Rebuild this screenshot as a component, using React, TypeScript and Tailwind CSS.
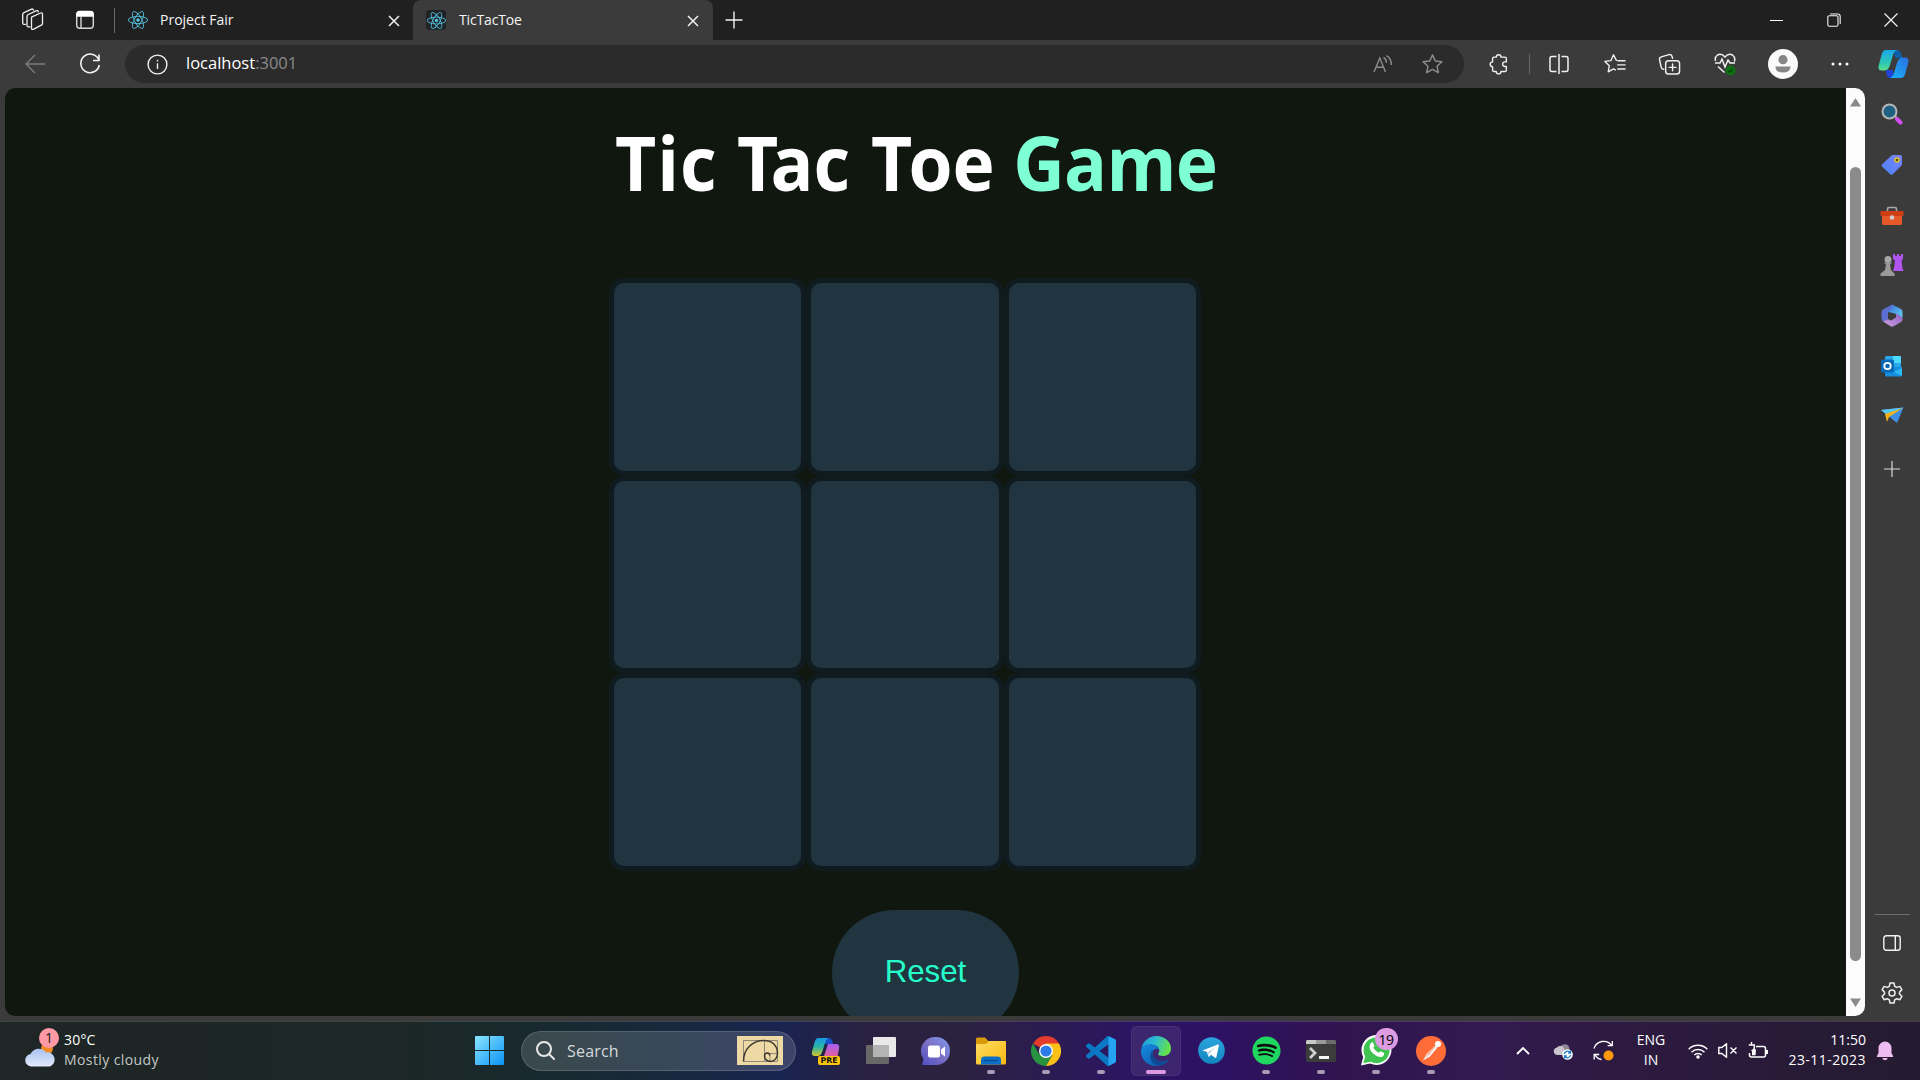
import React from "react";
import { FaReact, FaSpotify } from "react-icons/fa";

type Kids = { children?: React.ReactNode };

/* Stroked icon on a 24px canvas */
function Line({ children, s = 24, c = "#f0f0f0", w = 1.5 }: Kids & { s?: number; c?: string; w?: number }) {
  return (
    <svg width={s} height={s} viewBox="0 0 24 24" fill="none" stroke={c} strokeWidth={w} strokeLinecap="round" strokeLinejoin="round" className="shrink-0">
      {children}
    </svg>
  );
}

/* Filled icon on a 30px canvas */
function Art({ children, s = 30 }: Kids & { s?: number }) {
  return (
    <svg width={s} height={s} viewBox="0 0 30 30" className="shrink-0">
      {children}
    </svg>
  );
}

function TabClose() {
  return (
    <svg width="12" height="12" viewBox="0 0 12 12" stroke="#f2f2f2" strokeWidth="1.5" className="mt-px shrink-0">
      <path d="M1 1l10 10M11 1L1 11" />
    </svg>
  );
}

function TabBar() {
  return (
    <div className="flex h-10 shrink-0 bg-[#202020]">
      <div className="flex h-10 w-[114px] items-center">
        <div className="ml-[20px] flex w-[25px] justify-center">
          <Line w={1.3}>
            <path d="M10.5 9.2l9-4.2q2-.7 2 1.2v9.3q0 1.2-1.2 1.7l-7.6 4q-2.2.9-2.2-1.2z" />
            <path d="M9 18.8q-3 .6-3-1.5V8.5q0-1.4 1.3-2L15 2.8q2-.7 2.3 1" />
            <path d="M4.5 16.3q-2.8.6-2.8-1.5V6.500q0-1.200 1.300-1.800L10 1.300q2-.8 2.500.7" />
          </Line>
        </div>
        <div className="ml-[30px]">
          <svg width="20" height="20" viewBox="0 0 20 20" fill="none" stroke="#d8d8d8" strokeWidth="1.4">
            <rect x="1.700" y="1.700" width="16.600" height="16.600" rx="3" />
            <path d="M2 4q0-2.500 2.500-2.500h11Q18 1.500 18 4v2H2z" fill="#ffffff" stroke="#ffffff" />
            <path d="M6 6v12" />
          </svg>
        </div>
      </div>
      <div className="mt-2 h-[25px] w-px bg-[#6a6a6a]" />
      <div className="flex h-10 w-[298px] items-center pr-[13px] pl-[13px]">
        <FaReact size={20} color="#54c0de" />
        <span className="-mt-0.5 ml-[12px] text-[14px] text-[#f4f4f4]">Project Fair</span>
        <span className="ml-auto"><TabClose /></span>
      </div>
      <div className="flex h-10 w-[300px] items-center rounded-t-[8px] bg-[#3b3b3b] pr-[14px] pl-[13px]">
        <span className="flex size-5 items-center justify-center rounded-[3px] bg-[#202326]"><FaReact size={19} color="#54c0de" /></span>
        <span className="-mt-0.5 ml-[13px] text-[14px] tracking-[-0.15px] text-[#f4f4f4]">TicTacToe</span>
        <span className="ml-auto"><TabClose /></span>
      </div>
      <div className="flex h-10 w-[42px] items-center justify-center">
        <svg width="18" height="18" viewBox="0 0 18 18" stroke="#f2f2f2" strokeWidth="1.4"><path d="M9 .5v17M.5 9h17" /></svg>
      </div>
      <div className="ml-auto flex h-10">
        <div className="flex w-[57px] items-center justify-center"><div className="h-px w-[13px] bg-white" /></div>
        <div className="flex w-[57px] items-center justify-center">
          <svg width="14" height="14" viewBox="0 0 14 14" fill="none" stroke="#f4f4f4" strokeWidth="1.1">
            <rect x=".8" y="2.8" width="10.2" height="10.4" rx="1.5" />
            <path d="M3.200 1h7.600q2.400 0 2.400 2.400V11" />
          </svg>
        </div>
        <div className="flex w-[58px] items-center justify-center">
          <svg width="14" height="14" viewBox="0 0 14 14" stroke="#f2f2f2" strokeWidth="1.2"><path d="M.5.5l13 13M13.5.5l-13 13" /></svg>
        </div>
      </div>
    </div>
  );
}

function Slot({ children, w = "w-[55px]" }: Kids & { w?: string }) {
  return <div className={`flex h-full shrink-0 items-center justify-center ${w}`}>{children}</div>;
}

const starPath = "M12 2l2.900 6.300 6.900.8-5.100 4.700 1.400 6.800L12 17.200l-6.100 3.400 1.400-6.800L2.200 9.100l6.900-.8z";

function CopilotArt() {
  return (
    <svg width="31" height="28" viewBox="0 0 31 28" className="shrink-0">
      <defs>
        <linearGradient id="cpA" x1="0" y1="0" x2="0" y2="1"><stop offset="0" stopColor="#1aa9ea" /><stop offset=".6" stopColor="#2cc3b8" /><stop offset="1" stopColor="#5be08c" /></linearGradient>
        <linearGradient id="cpB" x1="1" y1="0" x2="0" y2="1"><stop offset="0" stopColor="#2a6ee0" /><stop offset="1" stopColor="#19b5f5" /></linearGradient>
      </defs>
      <path d="M15 0h4q3 0 4 4l1.500 4h-7z" fill="#0d5fa8" />
      <path d="M16 28h-4q-3 0-3.500-4L8 20h7z" fill="#2145d8" />
      <path d="M8 0h11q-3 1-4 5l-3 10q-1.500 5.500-6 5.500H4Q-.5 20.500.8 15l3-11Q5 0 8 0z" fill="url(#cpA)" />
      <path d="M23 28H12q3-1 4-5l3-10q1.500-5.500 6-5.500h2Q31.500 7.500 30.200 13l-3 11q-1.200 4-4.200 4z" fill="url(#cpB)" />
    </svg>
  );
}

function Toolbar() {
  return (
    <div className="flex h-12 shrink-0 items-center">
      <div className="flex w-[125px] shrink-0 items-center pl-[24px]">
        <svg width="22" height="20" viewBox="0 0 22 20" fill="none" stroke="#7c7c7c" strokeWidth="1.4"><path d="M21 10H2M11 1l-9 9 9 9" /></svg>
        <svg width="22" height="22" viewBox="0 0 22 22" fill="none" stroke="#f4f4f4" strokeWidth="1.6" className="ml-[33px]">
          <path d="M20 7.500A9.300 9.300 0 1 0 20.300 12M20 1.500v6h-6" />
        </svg>
      </div>
      <div className="flex h-[38px] w-[1339px] shrink-0 items-center rounded-full bg-[#2b2b2b] pr-[20px] pl-[22px]">
        <svg width="21" height="21" viewBox="0 0 21 21" fill="none" stroke="#f0f0f0" strokeWidth="1.4">
          <circle cx="10.500" cy="10.500" r="9.400" /><path d="M10.500 9.300v5.700" /><path d="M10.500 5.800v1.700" />
        </svg>
        <span className="-mt-px ml-[18px] text-[16.5px] text-white">localhost<span className="text-[#8a8a8a]">:3001</span></span>
        <div className="ml-auto flex items-center">
          <svg width="20" height="18" viewBox="0 0 20 18" fill="none" stroke="#8d8d8d" strokeWidth="1.4">
            <path d="M1 17L6.800 3 12.500 17M3 12.300h7.600" />
            <path d="M10.500 2.300q3 2 3 5.500M13.500.7q5 3 4.800 9.300" />
          </svg>
          <span className="ml-[28px]"><Line c="#8d8d8d" s={23}><path d={starPath} /></Line></span>
        </div>
      </div>
      <div className="ml-auto flex h-full items-center">
        <Slot w="w-[61px]">
          <Line s={22}><path d="M9 4.500a2.600 2.600 0 0 1 5.200 0h4.300q1.500 0 1.500 1.500v3.700h-1.600a2.500 2.500 0 0 0 0 5H20v4q0 1.500-1.500 1.500h-4.300a2.600 2.600 0 0 1-5.200 0H6.500Q5 20.200 5 18.700v-3.800a2.600 2.600 0 0 1 0-5.200V6q0-1.500 1.500-1.500z" /></Line>
        </Slot>
        <div className="h-5 w-px bg-[#666]" />
        <Slot w="w-[57px]">
          <svg width="20" height="20" viewBox="0 0 20 20" fill="none" stroke="#f2f2f2" strokeWidth="1.5"><path d="M7.500 2.500H3q-2 0-2 2v11q0 2 2 2h4.500M12.500 2.500H17q2 0 2 2v11q0 2-2 2h-4.500M10 0v20" /></svg>
        </Slot>
        <Slot>
          <Line s={22}><path d="M13.500 8L10.400 2 7.500 8.300l-6.500.9 4.800 4.600-1.200 6.800 5.800-3.200 2 1M15 8.500h8M15 13h8M15 17.500h8" /></Line>
        </Slot>
        <Slot>
          <Line s={23}><path d="M6 17q-2.300-.2-2.700-2.300L1.600 7Q1.200 4.700 3.500 4l8-2.300q2.200-.5 3 1.500l.7 2.300" /><rect x="8" y="8" width="14.500" height="14" rx="3" /><path d="M15.200 11.500v7M11.700 15h7" /></Line>
        </Slot>
        <Slot>
          <svg width="22" height="24" viewBox="0 0 22 24" fill="none" stroke="#f2f2f2" strokeWidth="1.5">
            <path d="M1.500 9Q.5 5 3.500 3 7.500 1 11 5q3.500-4 7.500-2 3 2 2 6.500M1 11h5l2-4 3 8 3-7 2 3h5M4 14.500l6.500 6" />
            <circle cx="16.500" cy="18.500" r="5" fill="#0f7012" stroke="none" /><path d="M14.300 18.600l1.500 1.500 3-3" stroke="#073f08" strokeWidth="1.2" />
          </svg>
        </Slot>
        <Slot w="w-[61px]">
          <svg width="30" height="30" viewBox="0 0 30 30"><circle cx="15" cy="15" r="15" fill="#fafafa" /><circle cx="15" cy="10.700" r="4.600" fill="#868686" /><path d="M7.500 17.500h15q0 6-7.500 6t-7.500-6z" fill="#868686" /></svg>
        </Slot>
        <Slot w="w-[54px]">
          <svg width="18" height="4" viewBox="0 0 18 4" fill="#fff"><circle cx="2" cy="2" r="1.5" /><circle cx="9" cy="2" r="1.5" /><circle cx="16" cy="2" r="1.5" /></svg>
        </Slot>
        <Slot w="w-[53px]"><CopilotArt /></Slot>
      </div>
    </div>
  );
}

function Game() {
  return (
    <main className="flex-1 overflow-hidden rounded-l-[10px] bg-[#0f170f]">
      <h1 className="mt-[24px] ml-[610px] h-[101px] origin-left scale-x-95 text-[75px] leading-[101px] font-bold whitespace-nowrap text-white">
        <span className="tracking-[1px]">Tic </span>
        <span className="tracking-[-8.2px]">T</span>ac<span className="tracking-[2.5px]"> </span>
        <span className="tracking-[-4px]">T</span>oe{" "}
        <span className="tracking-[-0.7px] text-[#7fffd4]">Game</span>
      </h1>
      <div className="mt-[65px] ml-[603.75px] grid w-[592.5px] grid-cols-3">
        {Array.from({ length: 9 }, (_, i) => (
          <div key={i} className="h-[197.5px] rounded-[15px] border-[5px] border-[#101b20] bg-[#203540]" />
        ))}
      </div>
      <button className="mt-[39.5px] ml-[827px] block h-[125px] w-[187px] rounded-[62.5px] bg-[#203540] font-['Liberation_Sans',sans-serif] text-[31.25px] text-[#26ffcb]">
        Reset
      </button>
    </main>
  );
}

function Scrollbar() {
  return (
    <div className="flex w-[19px] flex-col items-center rounded-r-[10px] bg-[#fcfcfc]">
      <svg width="11" height="9" viewBox="0 0 11 9" className="mt-[10px]"><path d="M5.500 0L11 8.500H0z" fill="#8b8b8b" /></svg>
      <div className="mt-[60px] h-[794px] w-[11px] rounded-full bg-[#8b8b8b]" />
      <svg width="11" height="9" viewBox="0 0 11 9" className="mt-[37px]"><path d="M5.500 9L11 .5H0z" fill="#8b8b8b" /></svg>
    </div>
  );
}

function SideItem({ children, h = "h-[50px]" }: Kids & { h?: string }) {
  return <div className={`flex w-full shrink-0 items-center justify-center pr-px ${h}`}>{children}</div>;
}

function Sidebar() {
  return (
    <aside className="flex w-[55px] flex-col items-center pt-px">
      <SideItem>
        <svg width="22" height="22" viewBox="0 0 22 22"><path d="M13 12l3 3" stroke="#aaa" strokeWidth="2" /><circle cx="8.500" cy="8.500" r="7" fill="#1f6182" stroke="#b5b5b5" strokeWidth="2" /><path d="M16 16l3.500 3.500" stroke="#d34df0" strokeWidth="4" strokeLinecap="round" /></svg>
      </SideItem>
      <SideItem h="h-[52px]">
        <svg width="22" height="22" viewBox="0 0 22 22"><defs><linearGradient id="tag" x1="0" y1="1" x2="1" y2="0"><stop stopColor="#4a83fa" /><stop offset="1" stopColor="#7b83f6" /></linearGradient></defs><path d="M12 1h7q2 0 2 2v7q0 1-1 2l-8.300 8.300q-1.200 1.200-2.400 0L1.200 12.700q-1.200-1.200 0-2.400L10 2q1-1 2-1z" fill="url(#tag)" /><circle cx="16" cy="6" r="2" fill="#4a4a20" stroke="#e5c51b" strokeWidth="1.5" /></svg>
      </SideItem>
      <SideItem>
        <svg width="24" height="20" viewBox="0 0 24 20"><path d="M7.500 5V3q0-1.500 1.500-1.500h6q1.500 0 1.500 1.500v2" fill="none" stroke="#a8a8a8" strokeWidth="1.6" /><rect x="2" y="9" width="20" height="10" rx="1.5" fill="#e5592a" /><rect x=".5" y="5" width="23" height="5" rx="1" fill="#cf3f17" /><circle cx="12" cy="11.500" r="2.200" fill="#cfcfcf" /></svg>
      </SideItem>
      <SideItem h="h-[48px]">
        <svg width="24" height="24" viewBox="0 0 24 24"><path d="M13 1h2v1.700h2V1h2v1.700h2V1h2v5l-1.500 1.500L22.500 15l1 3H13l1-3 1-7.500L13 6z" fill="#b055ee" /><circle cx="8" cy="6.500" r="3.500" fill="#a6a6a6" /><path d="M4.500 9.500h7v1.300H10l1 6.200 3.500 3.500V23h-14v-2.500L5 17l1-6.200H4.500z" fill="#9a9a9a" /></svg>
      </SideItem>
      <SideItem h="h-[53px]">
        <svg width="22" height="23" viewBox="0 0 22 23"><defs><linearGradient id="mA" x1="0" y1="0" x2="1" y2="1"><stop stopColor="#3b6fd8" /><stop offset="1" stopColor="#62d0ef" /></linearGradient><linearGradient id="mB" x1="0" y1="1" x2="1" y2="0"><stop stopColor="#cfa0e0" /><stop offset="1" stopColor="#8e63c4" /></linearGradient></defs><path d="M11 .5l9 4.500q1.500 1 1.500 2.500v6L14 9.500 7 8z" fill="url(#mA)" /><path d="M11 .5L2 5.500Q.5 6.500.5 8v7q0 1.500 1.500 2.500l5-2.500V8.500q0-1 1-2l3-2z" fill="#5c6fd0" /><path d="M2 17.500l5-2.500 3 1.500 5-3V9.500l6.500 4v2q0 1.500-1.500 2.500l-7.500 4.200q-1.500.8-3 0z" fill="url(#mB)" /></svg>
      </SideItem>
      <SideItem h="h-[48px]">
        <svg width="22" height="21" viewBox="0 0 22 21"><rect x="4" y="0" width="16" height="12" rx="1.5" fill="#28a8ea" /><path d="M12 0h7q1 0 1 1v6h-8z" fill="#50d9ff" /><path d="M4 11h17v8q0 1.500-1.500 1.500H5.500Q4 20.500 4 19z" fill="#1490df" /><path d="M21 12l-8 4 8 4z" fill="#2db7f5" /><rect x="0" y="3.500" width="13" height="13" rx="1.5" fill="#0868b8" /><circle cx="6.500" cy="10" r="3.200" fill="none" stroke="#fff" strokeWidth="1.8" /></svg>
      </SideItem>
      <SideItem>
        <svg width="23" height="17" viewBox="0 0 23 17"><path d="M0 3L22.500.500 16 16l-5-4z" fill="#3e8fe8" /><path d="M0 3L22.500.500 5 7z" fill="#5ac8f5" /><path d="M4 7L22 1 8 10 6 15z" fill="#f2b519" /></svg>
      </SideItem>
      <SideItem h="h-[58px]">
        <svg width="16" height="16" viewBox="0 0 16 16" stroke="#d8d8d8" strokeWidth="1.2"><path d="M8 0v16M0 8h16" /></svg>
      </SideItem>
      <div className="mt-auto h-px w-[35px] bg-[#6e6e6e]" />
      <SideItem h="h-[55px]">
        <svg width="18" height="16" viewBox="0 0 18 16" fill="none" stroke="#f2f2f2" strokeWidth="1.4"><rect x=".8" y=".8" width="16.400" height="14.400" rx="2.500" /><path d="M12.300 1v14" /></svg>
      </SideItem>
      <SideItem h="h-[46px]">
        <Line s={24} w={1.5}><circle cx="12" cy="12" r="3" /><path d="M10 2h4l.7 3.300 2 1.100 3.200-1 2 3.400-2.400 2.300v1.900l2.400 2.300-2 3.400-3.200-1-2 1.100L14 22h-4l-.7-3.200-2-1.100-3.200 1-2-3.400L4.500 13v-1.900L2.100 8.800l2-3.400 3.200 1 2-1.100z" /></Line>
      </SideItem>
      <div className="h-[5px]" />
    </aside>
  );
}

function TaskItem({ children, dot = false }: Kids & { dot?: boolean }) {
  return (
    <div className="relative flex h-[59px] w-[55px] shrink-0 items-center justify-center">
      {children}
      {dot && <div className="absolute bottom-[6px] left-[23.5px] h-1 w-2 rounded-full bg-[#a79bb5]" />}
    </div>
  );
}

function Taskbar() {
  return (
    <footer className="flex h-[59px] shrink-0 items-center bg-[linear-gradient(90deg,#1f2625_0px,#1c2726_400px,#172a30_560px,#172840_690px,#192450_780px,#2a2140_870px,#2b2240_960px,#2c1562_1130px,#2d1163_1220px,#30144f_1340px,#321a50_1480px,#2d1a40_1620px,#241b30_1920px)] text-white shadow-[inset_0_1px_0_rgba(255,255,255,0.14)]">
      <div className="flex w-[462px] items-center pl-[24px]">
        <div className="relative h-[40px] w-[32px]">
          <svg width="32" height="40" viewBox="0 0 32 40">
            <defs><linearGradient id="cl" x1="0" y1="0" x2="0" y2="1"><stop stopColor="#a9c2f2" /><stop offset="1" stopColor="#e3eafb" /></linearGradient></defs>
            <circle cx="23" cy="17.500" r="6" fill="#f08a24" />
            <path d="M7 35.500a6.300 6.300 0 0 1-.5-12.500A9 9 0 0 1 22 21.500a7 7 0 0 1 3 14z" fill="url(#cl)" />
          </svg>
          <div className="absolute top-[-3px] left-[15px] flex size-5 items-center justify-center rounded-full bg-[#ff99a4] text-[14px] text-[#202020]">1</div>
        </div>
        <div className="-mt-0.5 ml-2 text-[14px] leading-5">
          <div className="tracking-[0.2px]">30°C</div>
          <div className="tracking-[0.4px] text-[#c3c6c6]">Mostly cloudy</div>
        </div>
      </div>
      <TaskItem>
        <Art s={29}><defs><linearGradient id="win" x1="0" y1="0" x2="1" y2="1"><stop stopColor="#8be6ff" /><stop offset="1" stopColor="#0a93f5" /></linearGradient></defs><path d="M0 1q0-1 1-1h13.500v14.500H0zM15.500 0H29q1 0 1 1v13.500H15.500zM0 15.500h14.500V30H1q-1 0-1-1zM15.500 15.500H30V29q0 1-1 1H15.500z" fill="url(#win)" /></Art>
      </TaskItem>
      <div className="mr-[2.5px] ml-1 flex h-10 w-[275px] shrink-0 items-center rounded-full border border-white/15 bg-white/15 pr-[12px] pl-[14px]">
        <svg width="19" height="19" viewBox="0 0 19 19" fill="none" stroke="#e8e8e8" strokeWidth="2"><circle cx="8" cy="8" r="7" /><path d="M13 13l5 5" strokeLinecap="round" /></svg>
        <span className="ml-[12px] text-[16px] tracking-[0.2px] text-[#d6dadd]">Search</span>
        <svg width="46" height="29" viewBox="0 0 46 29" className="ml-auto">
          <rect width="46" height="29" fill="#eed9a4" />
          <path d="M6.500 4.500h34v21h-34zM27.500 4.500v21M27.500 17.500h13M33 17.500v8" fill="none" stroke="#8f8a77" strokeWidth="1" />
          <path d="M6.500 25.500C6.500 12 16 4.500 27 4.500c8 0 13.500 5 13.500 12.500 0 5-3 8.500-7 8.500-3.500 0-6-2.500-6-5.500 0-2 1.500-3 3-3 1.500 0 2.300 1 2 2.500" fill="none" stroke="#3d3930" strokeWidth="1.5" />
        </svg>
      </div>
      <TaskItem>
        <svg width="30" height="28" viewBox="0 0 30 28">
          <defs><linearGradient id="pA" x1="0" y1="0" x2="0" y2="1"><stop stopColor="#179ae8" /><stop offset=".5" stopColor="#2bb6a5" /><stop offset="1" stopColor="#d8c424" /></linearGradient><linearGradient id="pB" x1="0" y1="0" x2="0" y2="1"><stop stopColor="#a45ef0" /><stop offset="1" stopColor="#f0608a" /></linearGradient></defs>
          <path d="M13 1h5q3 0 4 6h-8z" fill="#1a50c8" />
          <path d="M7 1h11q-3 1-4 5l-2.500 8q-1.500 5-5 5H4q-4 0-3-4.500L4 4q1-3 3-3z" fill="url(#pA)" />
          <path d="M17 7h8q4 0 3 5l-2 10H12z" fill="url(#pB)" />
          <rect x="7" y="19" width="22" height="9" rx="2" fill="#fcc40c" />
          <text x="18" y="26.400" textAnchor="middle" fontSize="7.800" fontWeight="bold" fill="#111" fontFamily="DejaVu Sans, sans-serif">PRE</text>
        </svg>
      </TaskItem>
      <TaskItem>
        <Art><rect x="0" y="9" width="23" height="19" rx="1" fill="#686868" /><rect x="7" y="1" width="23" height="20" rx="1" fill="#e9e9e9" /><path d="M7 9h16v12H8q-1 0-1-1z" fill="#b4b4b4" /></Art>
      </TaskItem>
      <TaskItem>
        <Art><defs><linearGradient id="ch" x1="1" y1="0" x2="0" y2="1"><stop stopColor="#7f9cf0" /><stop offset=".5" stopColor="#7b6fc4" /><stop offset="1" stopColor="#4f4fc4" /></linearGradient></defs><path d="M15 1a14 14 0 1 1 0 28H2q-1 0-.7-1l1.200-5A14 14 0 0 1 15 1z" fill="url(#ch)" /><rect x="7" y="9.500" width="12" height="12" rx="2" fill="#fff" /><path d="M20 13.500l4-3v10l-4-3z" fill="#fff" /></Art>
      </TaskItem>
      <TaskItem dot>
        <Art><defs><linearGradient id="fo" x1="0" y1="0" x2="1" y2="1"><stop stopColor="#ffdc63" /><stop offset="1" stopColor="#f8b90f" /></linearGradient></defs><path d="M0 3q0-1.500 1.500-1.500H9L12.500 5H30v8H0z" fill="#d99a0b" /><path d="M0 8h10l3-3h15.500Q30 5 30 6.500V27q0 1.500-1.500 1.500h-27Q0 28.500 0 27z" fill="url(#fo)" /><path d="M5 28.500V24q0-3.500 3.500-3.500h13q3.500 0 3.500 3.500v4.500z" fill="#0d70c8" /><path d="M8.500 24.500h13" stroke="#074a8a" strokeWidth="1.3" /></Art>
      </TaskItem>
      <TaskItem dot>
        <Art><path d="M15 15L2.010 7.500A15 15 0 0 1 28 7.500z" fill="#e33b2e" /><path d="M2 7.500a15 15 0 0 0 13 22.500l6.500-11.500L15 15 8.500 18.700z" fill="#28933f" /><path d="M28 7.500H15v7.500l6.500 3.700L15 30A15 15 0 0 0 28 7.500z" fill="#fbc116" /><circle cx="15" cy="15" r="7" fill="#fff" /><circle cx="15" cy="15" r="5.600" fill="#2a7be8" /></Art>
      </TaskItem>
      <TaskItem dot>
        <svg width="30" height="30" viewBox="0 0 24 24"><path fill="#0a78c2" d="M23.150 2.587L18.210.210a1.494 1.494 0 0 0-1.705.290l-9.460 8.630-4.120-3.128a.999.999 0 0 0-1.276.057L.327 7.261A1 1 0 0 0 .326 8.740L3.899 12 .326 15.260a1 1 0 0 0 .001 1.479L1.650 17.940a.999.999 0 0 0 1.276.057l4.120-3.128 9.460 8.630a1.492 1.492 0 0 0 1.704.290l4.942-2.377A1.500 1.500 0 0 0 24 20.060V3.939a1.500 1.500 0 0 0-.850-1.352zm-5.146 14.861L10.826 12l7.178-5.448v10.896z" /><path d="M18 .1l5.150 2.490q.85.500.85 1.350V20.060q0 .9-.85 1.350L18 23.900z" fill="#25a3f0" /></svg>
      </TaskItem>
      <div className="relative flex h-[59px] w-[55px] shrink-0 items-center justify-center">
        <div className="flex size-[50px] items-center justify-center rounded-[6px] border border-white/5 bg-white/8">
          <Art>
            <defs><linearGradient id="eA" x1="0" y1="0" x2="1" y2=".3"><stop stopColor="#1b94dc" /><stop offset=".5" stopColor="#2dbdd0" /><stop offset="1" stopColor="#63e04e" /></linearGradient><linearGradient id="eB" x1="0" y1="0" x2="1" y2="1"><stop stopColor="#168ce0" /><stop offset="1" stopColor="#0b55a8" /></linearGradient></defs>
            <path d="M.5 12C2 5 8 0 15 0c9 0 15 6 15 12.500 0 5-3.800 7.500-8 7.500-3.500 0-5-1-5-2 0-.8 1.300-1.300 1.300-3.500 0-3-3-5.500-7.300-5.500-5 0-9 1-10.500 3z" fill="url(#eA)" />
            <path d="M0 15C0 11 4 8 9.500 8c5.500 0 9 3 9 6.500-1.500-2-3.500-2.300-5-1-4 3-2 11 6 12 4 .4 7.500-2 8-1.500s-4 6-12.500 6C6 30 0 23 0 15z" fill="url(#eB)" />
            <path d="M13.500 13.500c-7 3-5 14.500 4 16.300 5.500-.8 9-4 10-5.500.300-.8-3.500 1.700-8 1.200-8-1-10-9-6-12z" fill="#0c4a94" />
          </Art>
        </div>
        <div className="absolute bottom-[6px] left-[17.5px] h-1 w-5 rounded-full bg-[#dc9be2]" />
      </div>
      <TaskItem>
        <Art s={27}><defs><linearGradient id="tg" x1="0" y1="0" x2="0" y2="1"><stop stopColor="#2ba5de" /><stop offset="1" stopColor="#1285bd" /></linearGradient></defs><circle cx="15" cy="15" r="14.800" fill="url(#tg)" /><path d="M5.500 14.800L22 8.300q1.500-.4 1.200 1.200l-2.800 13q-.5 1.300-1.800.4l-4.200-3.100-2.200 2.100q-.6.500-.8-.4l-1.400-4.900-4.300-1.300q-1.200-.3-.2-.5z" fill="#fff" /><path d="M11 17l8.500-5.500-7 6.800-.4 3z" fill="#b5cfe4" /></Art>
      </TaskItem>
      <TaskItem dot>
        <div className="flex size-[29px] items-center justify-center rounded-full bg-[radial-gradient(#0c0c0c_60%,transparent_62%)]"><FaSpotify size={29} color="#1fd760" /></div>
      </TaskItem>
      <TaskItem dot>
        <Art><rect x="0" y="4" width="30" height="22" rx="1.500" fill="#3c3c3c" /><path d="M0 8V5.500Q0 4 1.500 4H10v4z" fill="#c9c9c9" /><path d="M10 4h10v4H10z" fill="#9a9a9a" /><path d="M20 4h8.500Q30 4 30 5.500V8H20z" fill="#6c6c6c" /><path d="M4 12l5 5-5 5" fill="none" stroke="#cfcfcf" strokeWidth="2.8" /><path d="M13 21.500h10" stroke="#f4f4f4" strokeWidth="3" /></Art>
      </TaskItem>
      <TaskItem dot>
        <div className="relative">
          <svg width="31" height="31" viewBox="0 0 31 31"><path d="M0 30.500L2.200 22A15 15 0 1 1 9 28.500z" fill="#fff" /><path d="M2.300 28.300L4.200 21.500A13 13 0 1 1 9.500 26.700z" fill="#3fc351" /><path d="M10 8q1-1 2-.6l1.500 3.400-1.200 2q2 3.500 5.500 5l2-1.500 3.300 1.700q.5 2-1.500 3.500-3 1.500-7.500-1.500t-5.500-7q-.4-3.500 1.400-5z" fill="#fff" /></svg>
          <div className="absolute top-[-7px] left-[14px] flex h-[22px] w-[23px] items-center justify-center rounded-full bg-[#dc9be2] text-[14px] tracking-[-0.5px] text-black">19</div>
        </div>
      </TaskItem>
      <TaskItem dot>
        <Art><circle cx="15" cy="15" r="15" fill="#ff6c37" /><circle cx="22" cy="8" r="3" fill="#fff" /><path d="M19.500 9.500l2 2-7.500 9-7 4 4-7z" fill="#f3f3f3" /><path d="M12 18l7-7M10 20.500l5-4" stroke="#ff8b62" strokeWidth=".8" /></Art>
      </TaskItem>
      <div className="ml-auto flex h-full items-center">
        <Slot w="w-[40px]"><svg width="14" height="9" viewBox="0 0 14 9" fill="none" stroke="#fff" strokeWidth="1.9"><path d="M1 8l6-6 6 6" /></svg></Slot>
        <Slot w="w-[40px]">
          <svg width="20" height="18" viewBox="0 0 20 18"><path d="M7 5a5 5 0 0 1 9.500 2l.5 5H8z" fill="#8c8791" /><path d="M4 13a3.800 3.800 0 0 1 0-7.500A4.500 4.500 0 0 1 11 6l2 7z" fill="#c9c4ce" /><circle cx="14.500" cy="12.500" r="5.300" fill="#fff" /><path d="M11.300 12a3.300 3.300 0 0 1 6-1.300M17.700 13a3.300 3.300 0 0 1-6 1.300M17.500 8.700v2.300h-2.300M11.500 16.300V14h2.300" fill="none" stroke="#1976c8" strokeWidth="1.3" /></svg>
        </Slot>
        <Slot w="w-[40px]">
          <svg width="21" height="21" viewBox="0 0 21 21" fill="none" stroke="#fff" strokeWidth="1.3"><path d="M1 8.500A10 10 0 0 1 18.700 5.500M19.300 1V5.700h-4.700M8.500 19.500Q3.500 18.500 2 14.500M1.200 19.500V14.500h5" /><circle cx="15.500" cy="15.500" r="5" fill="#ff9a0c" stroke="none" /></svg>
        </Slot>
        <Slot w="w-[56px]"><div className="-mt-0.5 text-center text-[14px] leading-5">ENG<br />IN</div></Slot>
        <Slot w="w-[38px]">
          <svg width="20" height="16" viewBox="0 0 20 16" fill="none" stroke="#fff" strokeWidth="1.5"><path d="M.7 6.200a13 13 0 0 1 18.600 0M3.500 9.200a9.200 9.200 0 0 1 13 0M6.300 12a5.200 5.200 0 0 1 7.400 0" /><circle cx="10" cy="14" r="1.800" fill="#fff" stroke="none" /></svg>
        </Slot>
        <Slot w="w-[21px]">
          <svg width="20" height="15" viewBox="0 0 20 15" fill="none" stroke="#fff" strokeWidth="1.4"><path d="M.8 4.500v6h3l4.700 3.700V.8L3.800 4.500zM12.500 4.500l6 6M18.500 4.500l-6 6" /></svg>
        </Slot>
        <Slot w="w-[40px]">
          <svg width="20" height="17" viewBox="0 0 20 17" fill="none" stroke="#fff" strokeWidth="1.5"><path d="M8 4.500h7.500q2 0 2 2V13q0 2-2 2H3.500q-2 0-2-2v-2" /><path d="M19 8v4" strokeWidth="2" /><path d="M3.500 0v2.500M.8 3h5.500v3q0 2.500-2.800 2.500" /><path d="M4 13.300V9l4-2-.5 6.300z" fill="#fff" stroke="none" /></svg>
        </Slot>
        <div className="-mt-0.5 w-[88px] text-right text-[14px] leading-5"><div>11:50</div><div className="tracking-[0.45px] whitespace-nowrap">23-11-2023</div></div>
        <div className="mr-[26px] ml-[10px]">
          <svg width="18" height="20" viewBox="0 0 18 20" fill="#eebcf0"><path d="M9 .5a6.500 6.500 0 0 1 6.500 6.500v5l1.700 3.300q.2.700-.5.700H1.300q-.7 0-.5-.7L2.500 12V7A6.500 6.500 0 0 1 9 .5z" /><path d="M6.200 17h5.600q-.8 2.300-2.800 2.300T6.200 17z" /></svg>
        </div>
      </div>
    </footer>
  );
}

export default function App() {
  return (
    <div className="flex h-[1080px] w-[1920px] flex-col overflow-hidden bg-[#3b3b3b] font-['Open_Sans','Noto_Sans',sans-serif]">
      <TabBar />
      <Toolbar />
      <div className="flex h-[933px] shrink-0">
        <div className="mb-[5px] ml-[5px] flex h-[928px] w-[1860px]">
          <Game />
          <Scrollbar />
        </div>
        <Sidebar />
      </div>
      <Taskbar />
    </div>
  );
}
